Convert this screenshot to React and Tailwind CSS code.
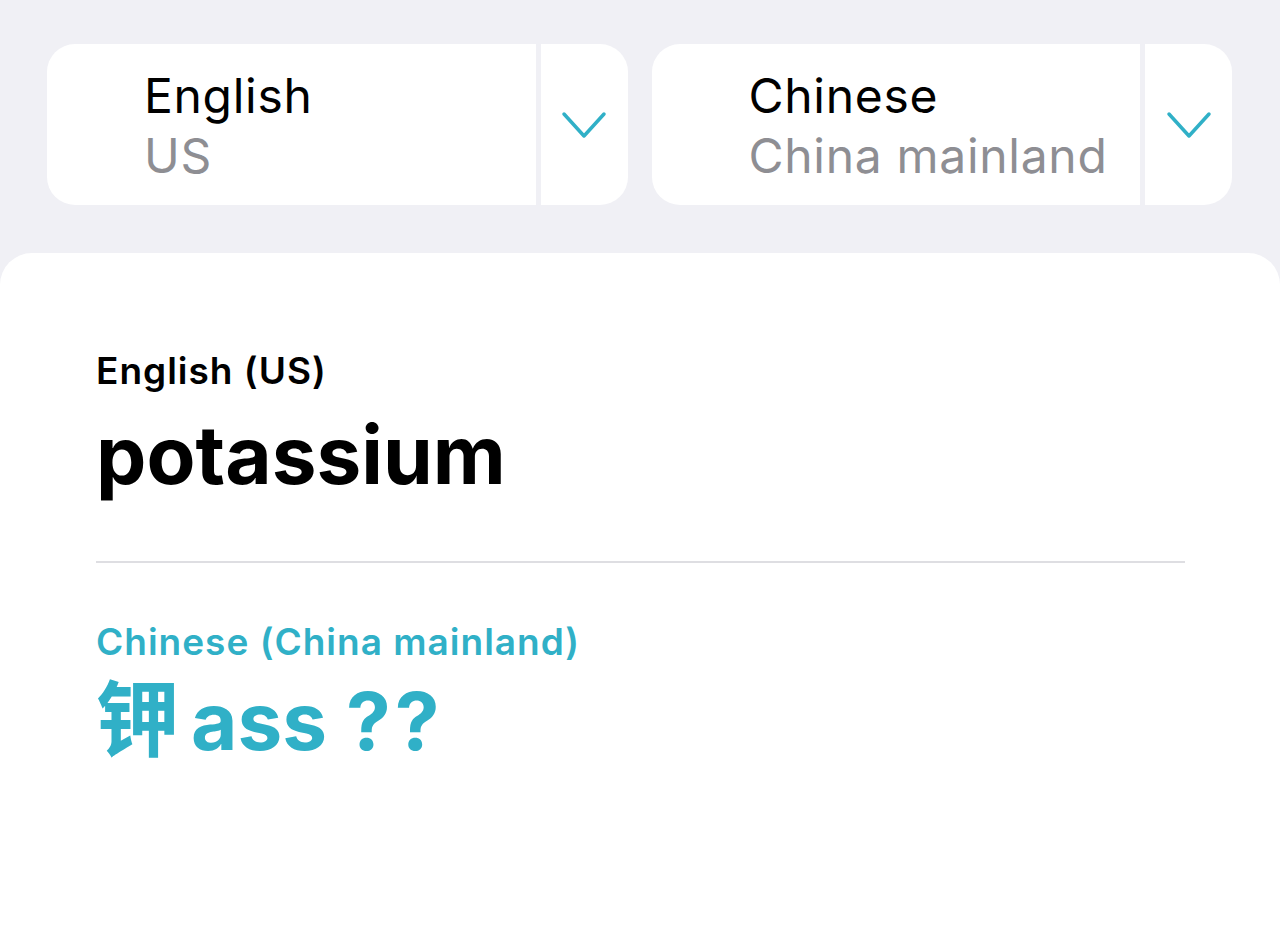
import React from 'react';

const font = { fontFamily: 'Inter, "Noto Sans CJK SC", sans-serif' };

const Chevron = () => (
    <svg width="46" height="29" viewBox="0 0 46 29" fill="none">
        <path d="M3 3 L23 25 L43 3" stroke="#30b0c7" strokeWidth="3.5" strokeLinecap="round" strokeLinejoin="round" />
    </svg>
);

const LangPicker = ({ name, region }) => (
    <div className="flex h-[161px] gap-[5px]">
        <div className="flex-1 bg-white rounded-l-[28px] pl-[97px] pt-[2px] flex flex-col justify-center">
            <div className="text-[48px] leading-[60px] text-black tracking-[0.7px]">{name}</div>
            <div className="text-[48px] leading-[60px] text-[#8e8e93] tracking-[0.7px]">{region}</div>
        </div>
        <div className="w-[87px] bg-white rounded-r-[28px] flex items-center justify-center pt-[2px]">
            <Chevron />
        </div>
    </div>
);

export default function App() {
    return (
        <div className="h-[950px] bg-[#f0f0f5] flex flex-col overflow-hidden" style={font}>
            <div className="grid grid-cols-2 gap-[24px] pl-[47px] pr-[48px] pt-[44px]">
                <LangPicker name="English" region="US" />
                <LangPicker name="Chinese" region="China mainland" />
            </div>

            <div className="flex-1 mt-[48px] bg-white rounded-t-[32px] pl-[96px] pr-[95px] pt-[96px]">
                <div className="text-[37px] leading-[44px] font-semibold text-black tracking-[1px]">English (US)</div>
                <div className="text-[80px] leading-[96px] font-bold text-black mt-[14px]">potassium</div>

                <div className="h-[2px] bg-[#dedee2] mt-[58px]" />

                <div className="text-[37px] leading-[44px] font-semibold text-[#30b0c7] mt-[57px] tracking-[1px]">Chinese (China mainland)</div>
                <div className="text-[80px] leading-[96px] font-bold text-[#30b0c7] mt-[8px]">
                    <span className="text-[83px] font-semibold">钾</span>
                    <span className="ml-[12px]">ass </span>
                    <span className="tracking-[4px]">??</span>
                </div>
            </div>
        </div>
    );
}
